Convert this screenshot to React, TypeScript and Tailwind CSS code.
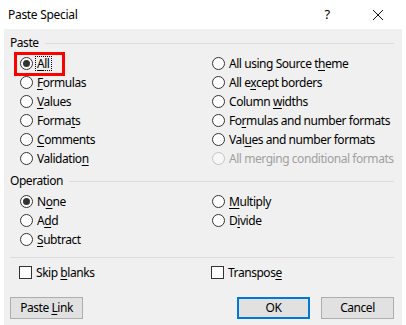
import React from 'react'

type Opt = { pre: string; key?: string; post?: string; checked?: boolean; disabled?: boolean; focus?: boolean }

const Label = ({ o }: { o: Opt }) => (
  <span className="whitespace-nowrap">
    {o.pre}
    {o.key && <span className="underline underline-offset-[2px]">{o.key}</span>}
    {o.post}
  </span>
)

const Radio = ({ o }: { o: Opt }) => (
  <div className={`flex items-center h-[19px] gap-[4px] ${o.disabled ? 'text-[#a0a0a0]' : 'text-black'}`}>
    <span
      className={`w-[13px] h-[13px] rounded-full border flex items-center justify-center shrink-0 ${
        o.disabled ? 'border-[#c4c4c4] bg-[#f7f7f7]' : 'border-[#333] bg-white'
      }`}
    >
      {o.checked && <span className="w-[7px] h-[7px] rounded-full bg-[#333]" />}
    </span>
    {o.focus ? (
      <span className="border border-dotted border-black px-[1px] h-[15px] flex items-center -ml-[2px]">
        <Label o={o} />
      </span>
    ) : (
      <Label o={o} />
    )}
  </div>
)

const Check = ({ o }: { o: Opt }) => (
  <div className="flex items-center h-[19px] gap-[4px]">
    <span className="w-[13px] h-[13px] border border-[#333] bg-white shrink-0" />
    <Label o={o} />
  </div>
)

const Group = ({ title }: { title: string }) => (
  <div className="flex items-center h-[16px] gap-[6px]">
    <span>{title}</span>
    <div className="flex-1 h-px bg-[#dcdcdc]" />
  </div>
)

const Btn = ({ children, primary }: { children: React.ReactNode; primary?: boolean }) => (
  <button
    className={`w-[73px] h-[22px] bg-[#e1e1e1] flex items-center justify-center whitespace-nowrap ${
      primary ? 'border-2 border-[#0078d7]' : 'border border-[#adadad]'
    }`}
  >
    {children}
  </button>
)

export default function App() {
  const pasteLeft: Opt[] = [
    { pre: '', key: 'A', post: 'll', checked: true, focus: true },
    { pre: '', key: 'F', post: 'ormulas' },
    { pre: '', key: 'V', post: 'alues' },
    { pre: 'Forma', key: 't', post: 's' },
    { pre: '', key: 'C', post: 'omments' },
    { pre: 'Validatio', key: 'n' },
  ]
  const pasteRight: Opt[] = [
    { pre: 'All using Source t', key: 'h', post: 'eme' },
    { pre: 'All e', key: 'x', post: 'cept borders' },
    { pre: 'Column ', key: 'w', post: 'idths' },
    { pre: 'Fo', key: 'r', post: 'mulas and number formats' },
    { pre: 'Val', key: 'u', post: 'es and number formats' },
    { pre: 'All merging conditional formats', disabled: true },
  ]
  const opLeft: Opt[] = [
    { pre: 'N', key: 'o', post: 'ne', checked: true },
    { pre: 'A', key: 'd', post: 'd' },
    { pre: '', key: 'S', post: 'ubtract' },
  ]
  const opRight: Opt[] = [
    { pre: '', key: 'M', post: 'ultiply' },
    { pre: 'D', key: 'i', post: 'vide' },
  ]

  return (
    <div className="w-[406px] h-[325px] bg-white relative text-[12px] text-black font-['Noto_Sans',sans-serif] tracking-[-0.45px] leading-none">
      {/* Title bar */}
      <div className="h-[29px] flex items-center pl-[8px]">
        <span className="flex-1 text-[12px] tracking-[-0.3px]">Paste Special</span>
        <span className="w-[12px] text-center text-[13px] mr-[39px]">?</span>
        <svg width="12" height="12" viewBox="0 0 12 12" className="mr-[22px]">
          <path d="M1 1 L11 11 M11 1 L1 11" stroke="#111" strokeWidth="1" />
        </svg>
      </div>

      {/* Body */}
      <div className="mx-[4px] h-[296px] bg-[#f0f0f0] pl-[6px] pr-[8px] flex flex-col">
        <div className="mt-[6px]">
          <Group title="Paste" />
        </div>
        <div className="mt-[3px] grid grid-cols-[192px_1fr] pl-[10px]">
          <div className="flex flex-col">
            {pasteLeft.map((o, i) => (
              <Radio key={i} o={o} />
            ))}
          </div>
          <div className="flex flex-col">
            {pasteRight.map((o, i) => (
              <Radio key={i} o={o} />
            ))}
          </div>
        </div>

        <div className="mt-[5px]">
          <Group title="Operation" />
        </div>
        <div className="mt-[3px] grid grid-cols-[192px_1fr] pl-[10px]">
          <div className="flex flex-col">
            {opLeft.map((o, i) => (
              <Radio key={i} o={o} />
            ))}
          </div>
          <div className="flex flex-col">
            {opRight.map((o, i) => (
              <Radio key={i} o={o} />
            ))}
          </div>
        </div>

        <div className="mt-[8px] h-px bg-[#dcdcdc]" />

        <div className="mt-[5px] grid grid-cols-[192px_1fr] pl-[9px]">
          <Check o={{ pre: 'Skip ', key: 'b', post: 'lanks' }} />
          <Check o={{ pre: 'Transpos', key: 'e' }} />
        </div>

        <div className="mt-[15px] flex items-center">
          <Btn>
            Paste&nbsp;<span className="underline underline-offset-[2px]">L</span>ink
          </Btn>
          <div className="flex-1" />
          <Btn primary>OK</Btn>
          <div className="w-[11px]" />
          <Btn>Cancel</Btn>
        </div>
      </div>

      {/* annotation highlight */}
      <div className="absolute left-[14px] top-[52px] w-[51px] h-[24px] border-[3px] border-[#ff0000]" />
    </div>
  )
}
